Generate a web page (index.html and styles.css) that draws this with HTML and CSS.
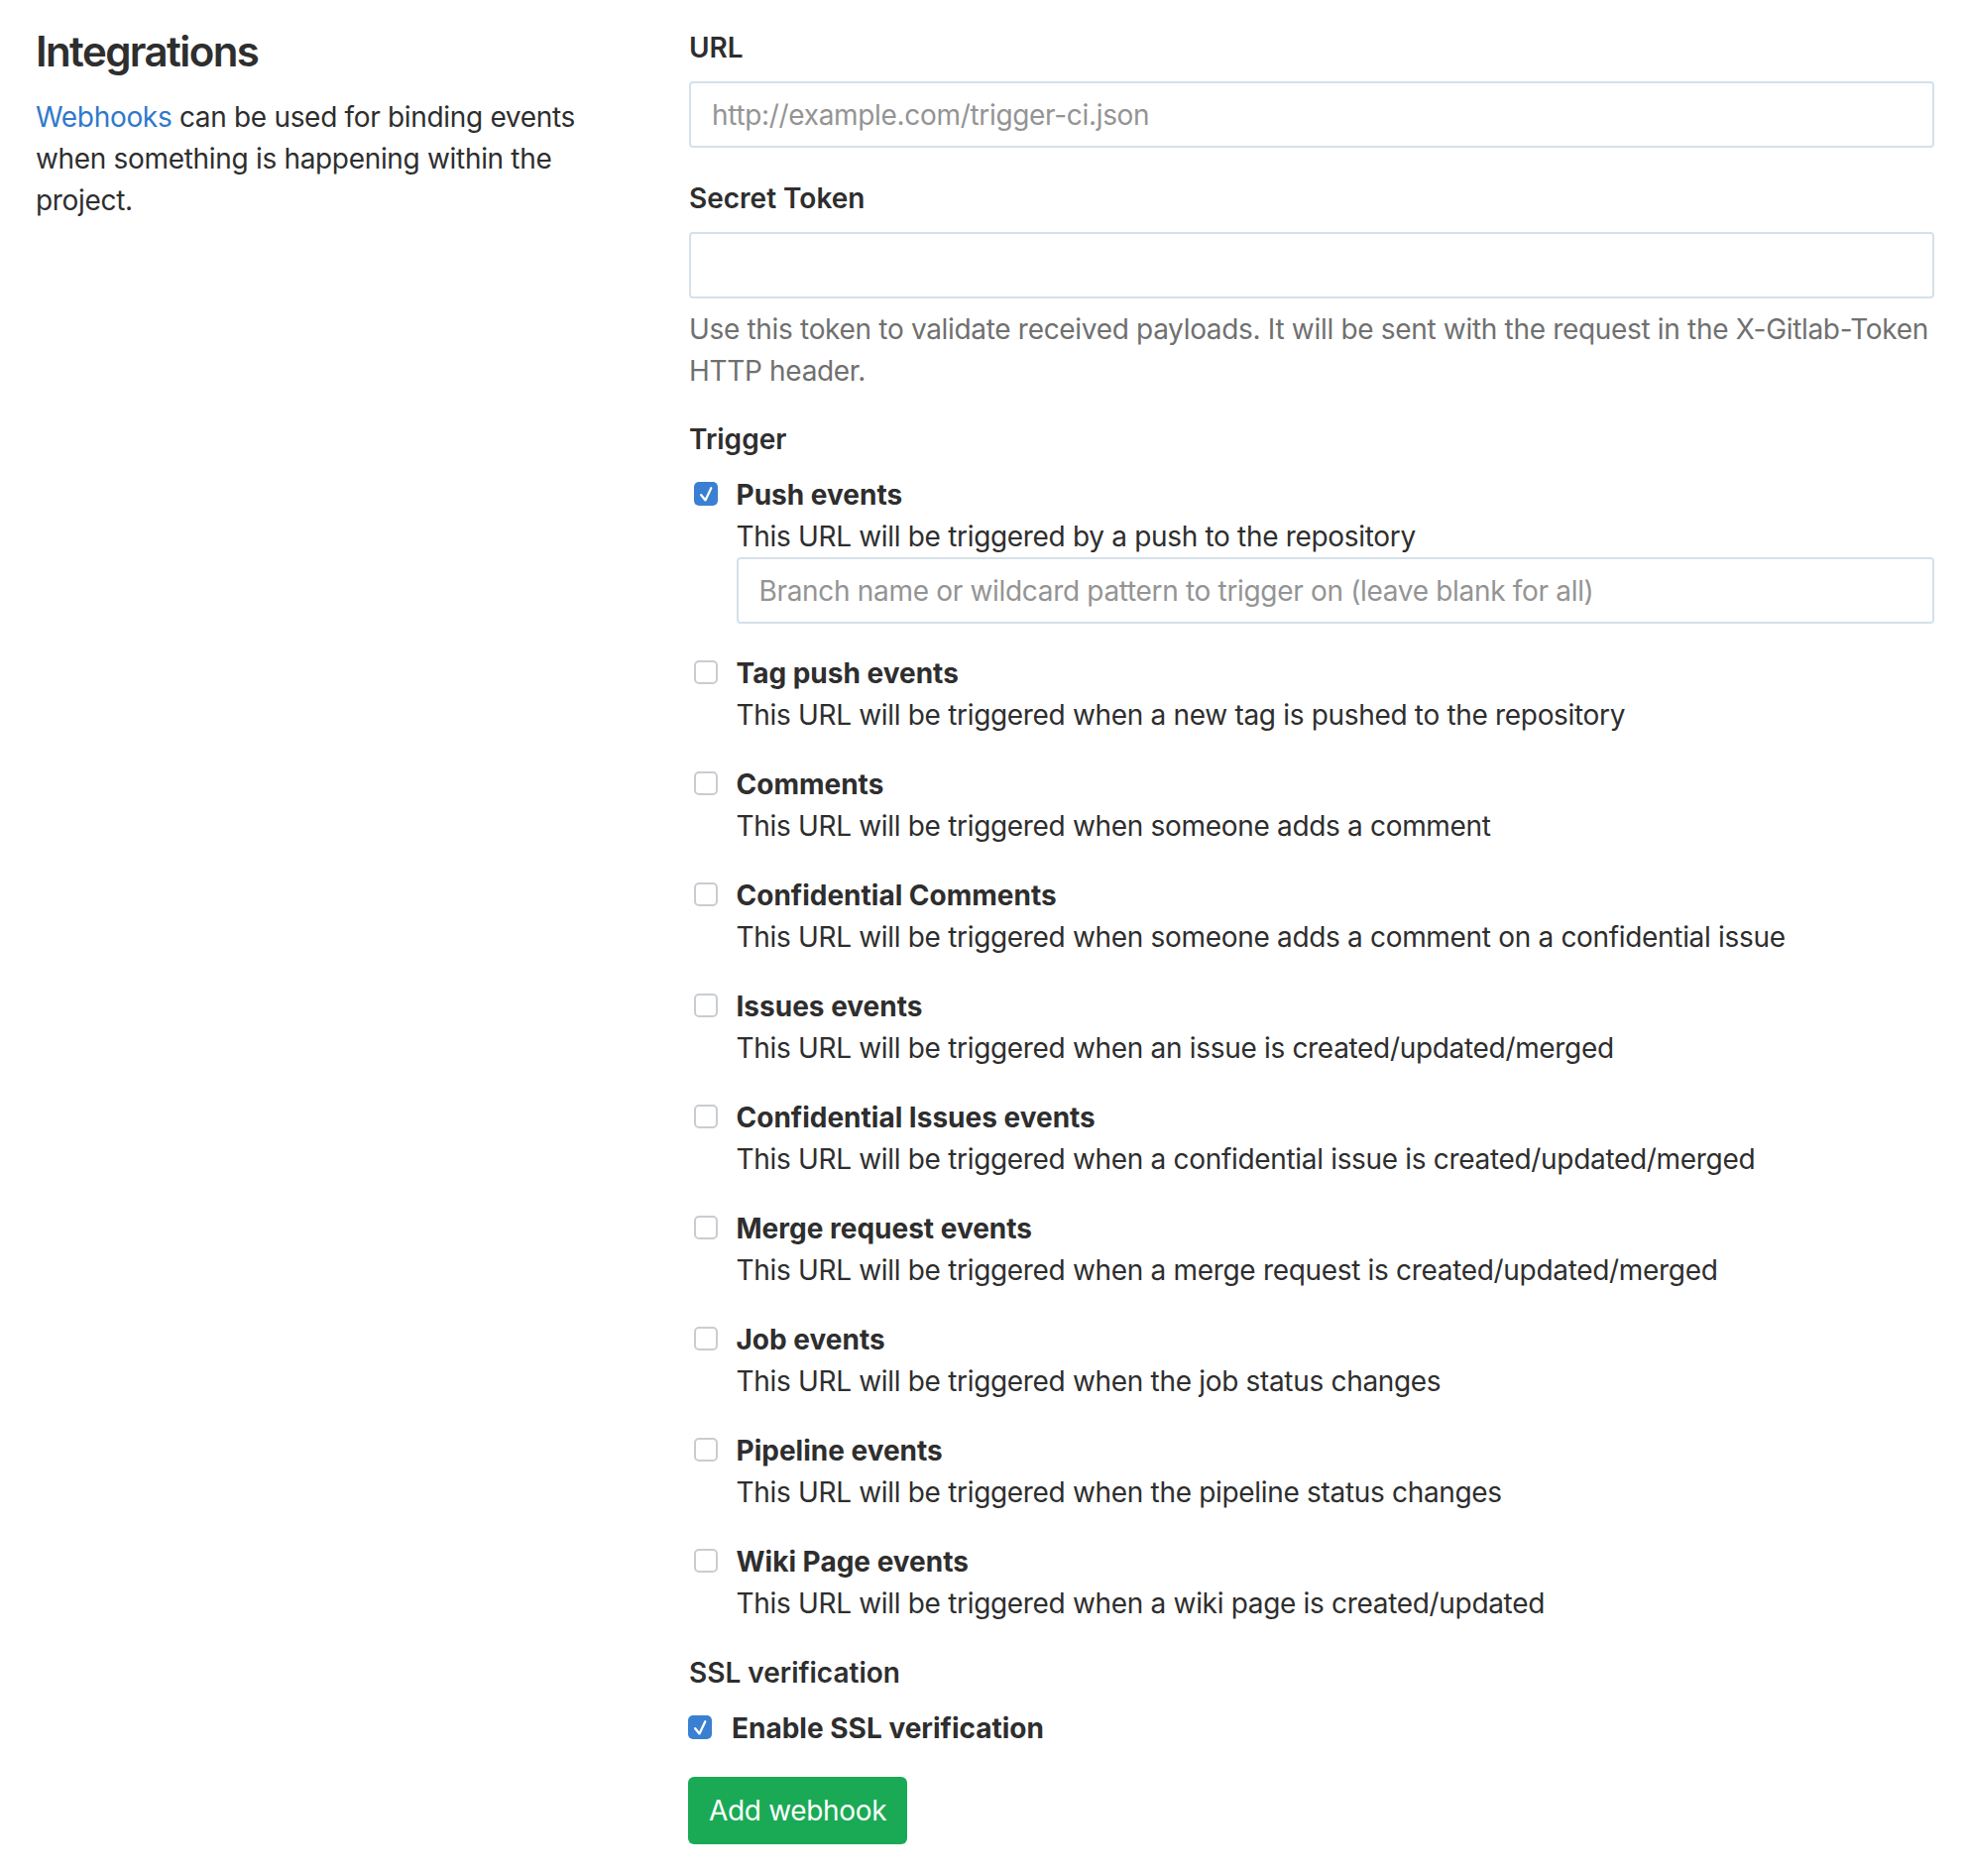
FILE: index.html
```html
<!DOCTYPE html>
<html lang="en">
<head>
<meta charset="utf-8">
<title>Integrations</title>
<link rel="stylesheet" href="styles.css">
</head>
<body>
<div class="page">
  <div class="intro">
    <h4 class="title">Integrations</h4>
    <p class="lead"><a href="#">Webhooks</a> can be used for binding events when something is happening within the project.</p>
  </div>
  <form class="form">
    <div class="group">
      <label class="label">URL</label>
      <input class="input" type="text" placeholder="http://example.com/trigger-ci.json">
    </div>
    <div class="group group-token">
      <label class="label">Secret Token</label>
      <input class="input" type="text">
      <p class="help">Use this token to validate received payloads. It will be sent with the request in the X-Gitlab-Token HTTP header.</p>
    </div>
    <div class="section-label">Trigger</div>
    <ul class="triggers">
      <li class="trigger">
        <span class="cb on"><svg viewBox="0 0 24 24" width="24" height="24"><path d="M7.2 13.2l4.3 5.2L17.3 6.2" fill="none" stroke="#fff" stroke-width="2.3" stroke-linecap="round" stroke-linejoin="round"/></svg></span>
        <span class="trigger-title">Push events</span>
        <p class="desc">This URL will be triggered by a push to the repository</p>
        <input class="input branch" type="text" placeholder="Branch name or wildcard pattern to trigger on (leave blank for all)">
      </li>
      <li class="trigger">
        <span class="cb"></span>
        <span class="trigger-title">Tag push events</span>
        <p class="desc">This URL will be triggered when a new tag is pushed to the repository</p>
      </li>
      <li class="trigger">
        <span class="cb"></span>
        <span class="trigger-title">Comments</span>
        <p class="desc">This URL will be triggered when someone adds a comment</p>
      </li>
      <li class="trigger">
        <span class="cb"></span>
        <span class="trigger-title">Confidential Comments</span>
        <p class="desc">This URL will be triggered when someone adds a comment on a confidential issue</p>
      </li>
      <li class="trigger">
        <span class="cb"></span>
        <span class="trigger-title">Issues events</span>
        <p class="desc">This URL will be triggered when an issue is created/updated/merged</p>
      </li>
      <li class="trigger">
        <span class="cb"></span>
        <span class="trigger-title">Confidential Issues events</span>
        <p class="desc">This URL will be triggered when a confidential issue is created/updated/merged</p>
      </li>
      <li class="trigger">
        <span class="cb"></span>
        <span class="trigger-title">Merge request events</span>
        <p class="desc">This URL will be triggered when a merge request is created/updated/merged</p>
      </li>
      <li class="trigger">
        <span class="cb"></span>
        <span class="trigger-title">Job events</span>
        <p class="desc">This URL will be triggered when the job status changes</p>
      </li>
      <li class="trigger">
        <span class="cb"></span>
        <span class="trigger-title">Pipeline events</span>
        <p class="desc">This URL will be triggered when the pipeline status changes</p>
      </li>
      <li class="trigger">
        <span class="cb"></span>
        <span class="trigger-title">Wiki Page events</span>
        <p class="desc">This URL will be triggered when a wiki page is created/updated</p>
      </li>
    </ul>
    <div class="section-label">SSL verification</div>
    <div class="ssl">
      <span class="cb on"><svg viewBox="0 0 24 24" width="24" height="24"><path d="M7.2 13.2l4.3 5.2L17.3 6.2" fill="none" stroke="#fff" stroke-width="2.3" stroke-linecap="round" stroke-linejoin="round"/></svg></span>
      <span class="trigger-title">Enable SSL verification</span>
    </div>
    <button class="btn" type="button">Add webhook</button>
  </form>
</div>
</body>
</html>
```

FILE: styles.css
```css
* {
  box-sizing: border-box;
}

body {
  margin: 0;
  font-family: Inter, "Liberation Sans", sans-serif;
  font-size: 28px;
  line-height: 42px;
  letter-spacing: -0.32px;
  color: #2e2e2e;
  background: #fff;
}

.page {
  display: grid;
  grid-template-columns: 599px 1fr;
  column-gap: 60px;
  padding: 27px 33px 0 36px;
}

.title {
  margin: 0;
  font-size: 42px;
  line-height: 50px;
  font-weight: 600;
  letter-spacing: -1.6px;
}

.lead {
  margin: 20px 0 0;
}

.lead a {
  color: #3079cb;
  text-decoration: none;
}

.form {
  margin: 0;
}

.group {
  margin-bottom: 30px;
}

.group-token {
  margin-bottom: 27px;
}

.label {
  display: block;
  font-weight: 600;
  letter-spacing: 0;
  margin-bottom: 13px;
}

.section-label {
  font-weight: 600;
  letter-spacing: 0;
  margin-bottom: 14px;
}

.input {
  display: block;
  width: 100%;
  height: 67px;
  margin: 0;
  padding: 0 21px;
  border: 2px solid #d6e1e9;
  border-radius: 4px;
  font: inherit;
  letter-spacing: inherit;
  color: #2e2e2e;
  background: #fff;
  outline: none;
}

.input::placeholder {
  color: #949494;
}

.help {
  margin: 10px 0 0;
  color: #707070;
}

.triggers {
  list-style: none;
  margin: 0;
  padding: 0;
}

.trigger {
  display: grid;
  grid-template-columns: 47.5px 1fr;
  margin-bottom: 28px;
}

.cb {
  grid-row: 1;
  grid-column: 1;
  display: block;
  width: 24px;
  height: 24px;
  margin: 8px 0 0 5px;
  border: 2px solid #c9cdd1;
  border-radius: 5px;
  background: #fff;
}

.cb.on {
  border: 0;
  background: #3a80d2;
}

.cb svg {
  display: block;
}

.trigger-title {
  grid-row: 1;
  grid-column: 2;
  font-weight: 700;
  letter-spacing: 0;
}

.desc {
  grid-column: 2;
  margin: 0;
}

.branch {
  grid-column: 2;
  margin-bottom: 1px;
}

.ssl {
  display: grid;
  grid-template-columns: 43px 1fr;
  margin-bottom: 28px;
}

.ssl .cb {
  margin-left: -1px;
}

.btn {
  display: block;
  height: 68px;
  margin-left: -1px;
  padding: 0 21px;
  border: 0;
  border-radius: 6px;
  background: #1aaa55;
  color: #fff;
  font: inherit;
  letter-spacing: inherit;
  cursor: pointer;
}
```
